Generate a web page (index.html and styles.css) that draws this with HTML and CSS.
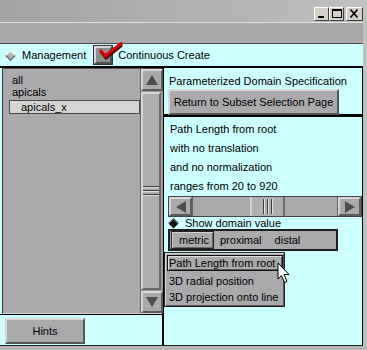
FILE: index.html
```html
<!DOCTYPE html>
<html lang="en">
<head>
  <meta charset="UTF-8">
  <meta name="viewport" content="width=device-width, initial-scale=1.0">
  <title>Parameterized Domain Specification</title>
  <link rel="stylesheet" href="styles.css">
</head>
<body>
  <div class="window">
    <div class="titlebar">
      <span class="win-btn">
        <svg width="13" height="12" viewBox="0 0 13 12"><rect x="3" y="8" width="6" height="2" fill="#000"/></svg>
      </span>
      <span class="win-btn">
        <svg width="13" height="12" viewBox="0 0 13 12"><rect x="2.5" y="1.5" width="9" height="8" fill="none" stroke="#000"/><rect x="2" y="1" width="10" height="2" fill="#000"/></svg>
      </span>
      <span class="win-btn close">
        <svg width="15" height="12" viewBox="0 0 15 12"><path d="M3.5 1.5 L10.5 9.5 M10.5 1.5 L3.5 9.5" stroke="#000" stroke-width="1.6"/></svg>
      </span>
    </div>

    <div class="frame">
      <div class="menubar"></div>

      <div class="toolbar">
        <span class="toggle">
          <svg class="diamond" width="11" height="11" viewBox="0 0 11 11">
            <path d="M5.5 0.5 L10.5 5.5 L5.5 10.5 L0.5 5.5 Z" fill="#b4b4b4"/>
            <path d="M0.8 5.5 L5.5 0.8 L10.2 5.5" fill="none" stroke="#f0f0f0" stroke-width="1.3"/>
            <path d="M0.8 5.5 L5.5 10.2 L10.2 5.5" fill="none" stroke="#6a6a6a" stroke-width="1.3"/>
          </svg>
          Management
        </span>
        <span class="toggle create">
          <span class="checkbox">
            <svg class="check" width="28" height="22" viewBox="0 0 28 22">
              <path d="M4 10 L9 16 L25 3" fill="none" stroke="#3a1010" stroke-width="3"/>
              <path d="M3 8 L8 14 L25 1" fill="none" stroke="#d80000" stroke-width="3.2"/>
            </svg>
          </span>
          Continuous Create
        </span>
      </div>

      <div class="main">
        <div class="left-panel">
          <div class="list-area">
            <ul class="list">
              <li>all</li>
              <li>apicals</li>
              <li class="selected">apicals_x</li>
            </ul>
            <div class="vscroll">
              <div class="arrow-btn">
                <svg width="12" height="10" viewBox="0 0 12 10"><path d="M6 0 L12 10 L0 10 Z" fill="#4e4e4e"/></svg>
              </div>
              <div class="vthumb"><span class="grip-h"></span></div>
              <div class="arrow-btn">
                <svg width="12" height="10" viewBox="0 0 12 10"><path d="M0 0 L12 0 L6 10 Z" fill="#4e4e4e"/></svg>
              </div>
            </div>
          </div>
          <div class="hints-row">
            <button class="btn hints">Hints</button>
          </div>
        </div>

        <div class="right-panel">
          <div class="spec-head">
            <div class="label">Parameterized Domain Specification</div>
            <button class="btn return">Return to Subset Selection Page</button>
          </div>

          <div class="spec-body">
            <p>Path Length from root</p>
            <p>with no translation</p>
            <p>and no normalization</p>
            <p>ranges from 20 to 920</p>

            <div class="hscroll">
              <div class="arrow-btn side">
                <svg width="10" height="12" viewBox="0 0 10 12"><path d="M0 6 L10 0 L10 12 Z" fill="#4e4e4e"/></svg>
              </div>
              <div class="htrack">
                <div class="hthumb"><span class="grip-v"></span></div>
              </div>
              <div class="arrow-btn side">
                <svg width="10" height="12" viewBox="0 0 10 12"><path d="M10 6 L0 0 L0 12 Z" fill="#4e4e4e"/></svg>
              </div>
            </div>

            <div class="show-value">
              <svg width="11" height="11" viewBox="0 0 11 11">
                <path d="M5.5 0.5 L10.5 5.5 L5.5 10.5 L0.5 5.5 Z" fill="#111"/>
                <path d="M0.8 5.5 L5.5 0.8 L10.2 5.5" fill="none" stroke="#5a5a5a" stroke-width="1.2"/>
              </svg>
              Show domain value
            </div>

            <div class="radio-box">
              <span class="seg active">metric</span>
              <span class="seg">proximal</span>
              <span class="seg">distal</span>
            </div>

            <ul class="menu">
              <li class="current">Path Length from root</li>
              <li>3D radial position</li>
              <li>3D projection onto line</li>
            </ul>
          </div>

          <svg class="cursor" width="14" height="22" viewBox="0 0 14 22">
            <path d="M1 1 L1 17 L4.5 13.5 L7.5 20.5 L10 19.5 L7 12.5 L12 12.5 Z" fill="#fff" stroke="#000" stroke-width="1"/>
          </svg>
        </div>
      </div>
    </div>
  </div>
</body>
</html>
```

FILE: styles.css
```css
body {
  margin: 0;
  font-family: "Liberation Sans", Arial, sans-serif;
  font-size: 11px;
  color: #000;
  background-color: #c4c4c4;
}
.window {
  width: 367px;
  height: 350px;
  display: flex;
  flex-direction: column;
  overflow: hidden;
}
.titlebar {
  height: 22px;
  box-sizing: border-box;
  padding: 0 4px 1px 0;
  display: flex;
  justify-content: flex-end;
  align-items: flex-end;
  background: linear-gradient(90deg, #a3a3a3, #aeb0ad 40%, #b4b4b6 70%, #c2c2c2);
}
.win-btn {
  width: 15px;
  height: 14px;
  box-sizing: border-box;
  display: flex;
  align-items: center;
  justify-content: center;
  background-color: #d4d0c8;
  border: 1px solid;
  border-color: #fff #404040 #404040 #fff;
}
.win-btn.close {
  width: 17px;
  margin-left: 2px;
}
.frame {
  flex: 1;
  display: flex;
  flex-direction: column;
  border-right: 4px solid #c0c0c0;
  border-bottom: 4px solid #b4b4b4;
  box-shadow: inset -1px 0 #e8e8e8;
}
.menubar {
  height: 20px;
  background-color: #a9a8ab;
  border-top: 1px solid #e2e2e2;
  border-bottom: 1px solid #4a4a4a;
}
.toolbar {
  height: 22px;
  display: flex;
  align-items: center;
  gap: 8px;
  padding-left: 5px;
  background-color: #ccffff;
  border-bottom: 2px solid #000;
}
.toggle {
  display: flex;
  align-items: center;
  gap: 6px;
}
.checkbox {
  position: relative;
  width: 18px;
  height: 18px;
  box-sizing: border-box;
  background-color: #8e8d90;
  border: 2px solid;
  border-color: #d8d8d8 #505050 #505050 #d8d8d8;
  outline: 1px solid #333;
}
.check {
  position: absolute;
  left: 1px;
  top: -6px;
}
.create {
  gap: 6px;
}
.main {
  height: 277px;
  display: flex;
  border-bottom: 1px solid #222;
}
.left-panel {
  width: 162px;
  display: flex;
  flex-direction: column;
  background-color: #ccffff;
  border-right: 2px solid #000;
}
.list-area {
  height: 244px;
  margin-left: 2px;
  display: flex;
  background-color: #aaa9ac;
  border-left: 1px solid #333;
  border-top: 1px solid #555;
  border-bottom: 1px solid #d0d0d0;
}
.list {
  flex: 1;
  list-style: none;
  margin: 0;
  padding: 5px 0 0 9px;
  line-height: 12px;
}
.list .selected {
  width: 118px;
  margin: 2px 0 0 -3px;
  padding-left: 11px;
  line-height: 12px;
  background-color: #d4d4d4;
  border: 1px solid #4a4a4a;
}
.vscroll {
  width: 23px;
  display: flex;
  flex-direction: column;
  background-color: #9a999c;
  border-left: 1px solid #6a6a6a;
}
.arrow-btn {
  height: 22px;
  box-sizing: border-box;
  display: flex;
  align-items: center;
  justify-content: center;
  background-color: #aaa9ac;
  border: 2px solid;
  border-color: #d6d6d6 #5c5c5c #5c5c5c #d6d6d6;
}
.vthumb {
  flex: 1;
  margin: 1px 2px 1px 0;
  display: flex;
  align-items: center;
  justify-content: center;
  background-color: #afaeb1;
  border: 2px solid;
  border-color: #d6d6d6 #6a6a6a #6a6a6a #d6d6d6;
}
.grip-h {
  width: 16px;
  height: 10px;
  background: repeating-linear-gradient(#3c3c3c 0 1px, #e0e0e0 1px 2px, transparent 2px 4px);
}
.hints-row {
  flex: 1;
  padding: 3px 0 0 5px;
  border-top: 1px solid #000;
}
.btn {
  font-family: inherit;
  font-size: 11px;
  color: #000;
  background-color: #aaa9ac;
  border: 2px solid;
  border-color: #d8d8d8 #555 #555 #d8d8d8;
  padding: 0;
}
.hints {
  width: 80px;
  height: 26px;
}
.right-panel {
  position: relative;
  flex: 1;
  background-color: #ccffff;
  border-right: 1px solid #000;
}
.spec-head {
  height: 49px;
  box-sizing: border-box;
  padding: 7px 0 0 5px;
  border-bottom: 3px solid #000;
}
.label {
  line-height: 13px;
}
.return {
  width: 171px;
  height: 26px;
  margin: 1px 0 0 -1px;
}
.spec-body {
  padding: 3px 0 0 6px;
}
.spec-body p {
  margin: 0;
  line-height: 19px;
}
.hscroll {
  width: 194px;
  height: 21px;
  margin: 0 0 0 -2px;
  display: flex;
  box-sizing: border-box;
  border: 1px solid #444;
  background-color: #aaa9ac;
}
.arrow-btn.side {
  width: 23px;
  height: 19px;
}
.htrack {
  flex: 1;
  padding: 0 0 0 57px;
  display: flex;
  border-left: 1px solid #666;
  border-right: 1px solid #666;
}
.hthumb {
  width: 31px;
  display: flex;
  align-items: center;
  justify-content: center;
  background-color: #afaeb1;
  border: 2px solid;
  border-color: #d6d6d6 #6a6a6a #6a6a6a #d6d6d6;
  border-top: none;
  border-bottom: none;
}
.grip-v {
  width: 10px;
  height: 15px;
  background: repeating-linear-gradient(90deg, #3c3c3c 0 1px, #e0e0e0 1px 2px, transparent 2px 4px);
}
.show-value {
  height: 12px;
  margin-left: -2px;
  display: flex;
  align-items: center;
  gap: 6px;
}
.radio-box {
  width: 170px;
  height: 22px;
  margin-left: -2px;
  box-sizing: border-box;
  display: flex;
  align-items: center;
  padding-left: 1px;
  background-color: #aaa9ac;
  border: 2px solid #1e1e1e;
}
.seg {
  padding: 0 8px 0 5px;
  line-height: 16px;
}
.seg.active {
  width: 43px;
  box-sizing: border-box;
  padding: 0 0 0 7px;
  margin-right: 1px;
  border: 1px solid #222;
  box-shadow: inset 1px 1px #d0d0d0, inset -1px -1px #6a6a6a;
}
.menu {
  width: 121px;
  list-style: none;
  margin: 1px 0 0 -6px;
  padding: 2px 1px 1px 2px;
  box-sizing: border-box;
  background-color: #aaa9ac;
  border: 1px solid #222;
  box-shadow: inset 1px 1px #d8d8d8, inset -1px -1px #555;
}
.menu li {
  line-height: 16px;
  padding-left: 2px;
}
.menu .current {
  line-height: 14px;
  padding-left: 1px;
  margin-bottom: 2px;
  border: 1px solid #111;
  box-shadow: inset 1px 1px #dcdcdc, inset -1px -1px #5a5a5a;
}
.cursor {
  position: absolute;
  left: 113px;
  top: 194px;
}
```
